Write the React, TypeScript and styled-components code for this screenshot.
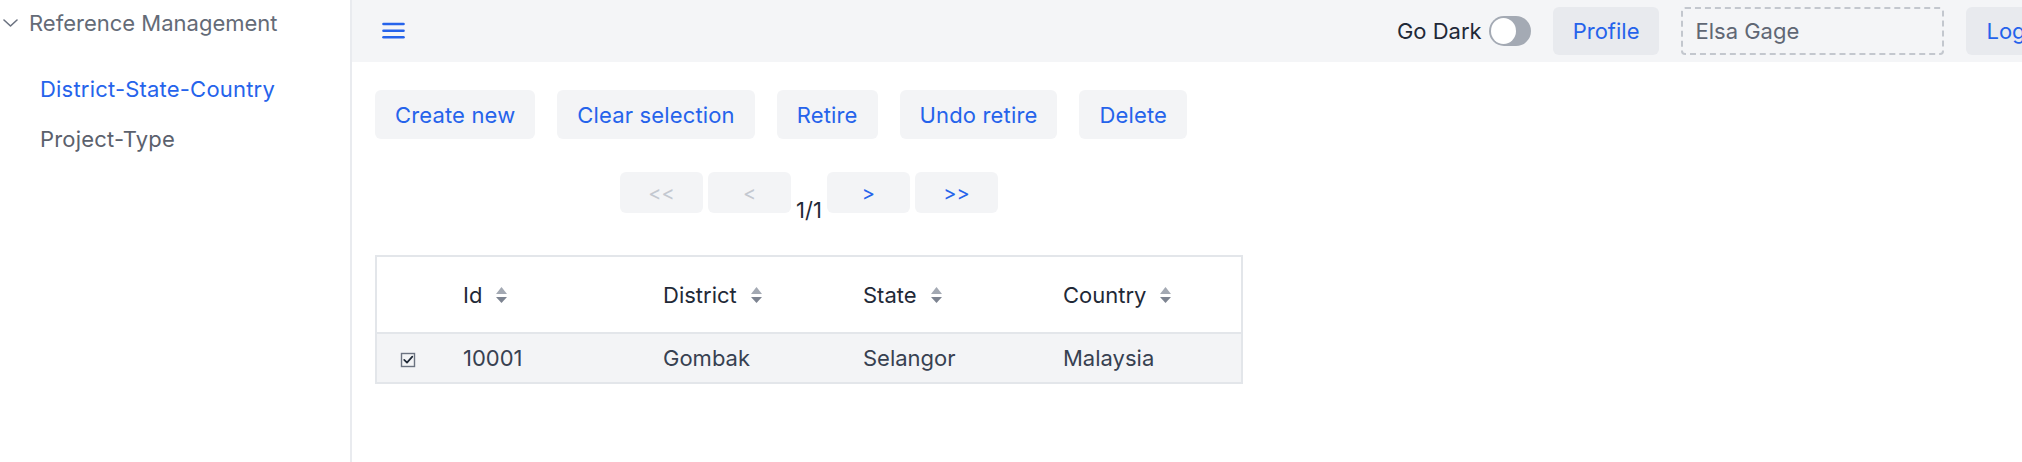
import styled, { createGlobalStyle } from 'styled-components'

const GlobalStyle = createGlobalStyle`
    html, body {
        margin: 0;
        padding: 0;
        background: #ffffff;
        overflow: hidden;
    }
    body {
        font-family: Inter, "Noto Sans", "Liberation Sans", sans-serif;
        color: #1f2937;
    }
    * {
        box-sizing: border-box;
    }
`

const rows = [
    { id: '10001', district: 'Gombak', state: 'Selangor', country: 'Malaysia' },
]

const columns = ['Id', 'District', 'State', 'Country']

export default function App() {
    return (
        <>
            <GlobalStyle />
            <Root>
                <Sidebar>
                    <GroupTitle>
                        <svg width="15" height="8" viewBox="0 0 15 8" aria-hidden="true">
                            <polyline points="1,1 7.5,7 14,1" fill="none" stroke="#6b7280" strokeWidth="1.6" strokeLinecap="round" strokeLinejoin="round" />
                        </svg>
                        Reference Management
                    </GroupTitle>
                    <NavList>
                        <NavItem $active>District-State-Country</NavItem>
                        <NavItem>Project-Type</NavItem>
                    </NavList>
                </Sidebar>

                <Main>
                    <TopBar>
                        <MenuButton aria-label="menu">
                            <svg width="23" height="18" viewBox="0 0 23 18" aria-hidden="true">
                                <g stroke="#2563eb" strokeWidth="2.6" strokeLinecap="round">
                                    <line x1="1.5" y1="2" x2="21.5" y2="2" />
                                    <line x1="1.5" y1="8.7" x2="21.5" y2="8.7" />
                                    <line x1="1.5" y1="15.3" x2="21.5" y2="15.3" />
                                </g>
                            </svg>
                        </MenuButton>
                        <TopRight>
                            <ThemeLabel>
                                Go Dark
                                <Toggle />
                            </ThemeLabel>
                            <BarButton>Profile</BarButton>
                            <UserBox>Elsa Gage</UserBox>
                            <BarButton>Logout</BarButton>
                        </TopRight>
                    </TopBar>

                    <Content>
                        <Actions>
                            <ActionButton>Create new</ActionButton>
                            <ActionButton>Clear selection</ActionButton>
                            <ActionButton>Retire</ActionButton>
                            <ActionButton>Undo retire</ActionButton>
                            <ActionButton>Delete</ActionButton>
                        </Actions>

                        <TableArea>
                            <Pager>
                                <PageButton disabled>&lt;&lt;</PageButton>
                                <PageButton disabled>&lt;</PageButton>
                                <PageCount>1/1</PageCount>
                                <PageButton>&gt;</PageButton>
                                <PageButton>&gt;&gt;</PageButton>
                            </Pager>

                            <Table>
                                <colgroup>
                                    <col style={{ width: 67 }} />
                                    <col style={{ width: 200 }} />
                                    <col style={{ width: 200 }} />
                                    <col style={{ width: 200 }} />
                                    <col />
                                </colgroup>
                                <thead>
                                    <tr>
                                        <HeadCell />
                                        {columns.map(c => (
                                            <HeadCell key={c}>
                                                <HeadInner>
                                                    {c}
                                                    <SortIcon />
                                                </HeadInner>
                                            </HeadCell>
                                        ))}
                                    </tr>
                                </thead>
                                <tbody>
                                    {rows.map(r => (
                                        <BodyRow key={r.id}>
                                            <CheckCell>
                                                <svg width="16" height="16" viewBox="0 0 16 16" aria-hidden="true">
                                                    <rect x="1.5" y="1.5" width="13" height="13" fill="none" stroke="#6b7280" strokeWidth="1.4" />
                                                    <polyline points="4.2,7.8 7,10.6 12.3,4.6" fill="none" stroke="#1f2937" strokeWidth="1.7" strokeLinecap="round" strokeLinejoin="round" />
                                                </svg>
                                            </CheckCell>
                                            <Cell>{r.id}</Cell>
                                            <Cell>{r.district}</Cell>
                                            <Cell>{r.state}</Cell>
                                            <Cell>{r.country}</Cell>
                                        </BodyRow>
                                    ))}
                                </tbody>
                            </Table>
                        </TableArea>
                    </Content>
                </Main>
            </Root>
        </>
    )
}

function SortIcon() {
    return (
        <svg width="11" height="18" viewBox="0 0 11 18" aria-hidden="true">
            <polygon points="0,8 5.5,1 11,8" fill="#a3a9b3" />
            <polygon points="0,11 5.5,17 11,11" fill="#7d8491" />
        </svg>
    )
}


/*___Styling___*/

const Root = styled.div`
    display: flex;
    width: 2103px;
    min-height: 462px;
`

const Sidebar = styled.aside`
    width: 352px;
    flex-shrink: 0;
    border-right: 2px solid #e9ebef;
    background: #ffffff;
`

const GroupTitle = styled.div`
    display: flex;
    align-items: center;
    gap: 11px;
    padding: 8px 0 8px 3px;
    line-height: 30px;
    font-size: 22px;
    color: #646b77;
`

const NavList = styled.ul`
    list-style: none;
    margin: 18px 0 0;
    padding: 0 0 0 40px;
`

const NavItem = styled.li<{ $active?: boolean }>`
    font-size: 22px;
    line-height: 30px;
    padding: 10px 0;
    letter-spacing: 0.2px;
    color: ${p => (p.$active ? '#2563eb' : '#5b616d')};
`

const Main = styled.main`
    flex: 1;
    display: flex;
    flex-direction: column;
`

const TopBar = styled.header`
    height: 62px;
    background: #f4f5f7;
    display: flex;
    align-items: center;
    padding: 0 24px 0 30px;
`

const MenuButton = styled.button`
    border: none;
    background: none;
    padding: 0;
    display: flex;
    cursor: pointer;
`

const TopRight = styled.div`
    margin-left: auto;
    display: flex;
    align-items: center;
    gap: 22px;
`

const ThemeLabel = styled.label`
    display: flex;
    align-items: center;
    gap: 7px;
    font-size: 22px;
    color: #1f2937;
`

const Toggle = styled.span`
    position: relative;
    display: inline-block;
    width: 42px;
    height: 30px;
    border-radius: 15px;
    background: #a4aab4;

    &::before {
        content: '';
        position: absolute;
        left: 2px;
        top: 2px;
        width: 25px;
        height: 26px;
        border-radius: 50%;
        background: #ffffff;
    }
`

const BarButton = styled.button`
    height: 48px;
    padding: 0 20px;
    border: none;
    border-radius: 6px;
    background: #e8eaee;
    color: #2563eb;
    font-family: inherit;
    font-size: 22px;
    cursor: pointer;
`

const UserBox = styled.div`
    width: 263px;
    height: 48px;
    display: flex;
    align-items: center;
    padding: 0 12px;
    border: 2px dashed #c3c7ce;
    border-radius: 4px;
    font-size: 22px;
    color: #606774;
`

const Content = styled.div`
    padding: 28px 23px;
`

const Actions = styled.div`
    display: flex;
    gap: 22px;
`

const ActionButton = styled.button`
    height: 49px;
    padding: 0 20px;
    border: none;
    border-radius: 6px;
    background: #f3f4f6;
    color: #2563eb;
    font-family: inherit;
    font-size: 22px;
    letter-spacing: 0.15px;
    cursor: pointer;
`

const TableArea = styled.div`
    width: 868px;
`

const Pager = styled.div`
    display: flex;
    justify-content: center;
    gap: 5px;
    margin: 33px 0 42px;
`

const PageButton = styled.button`
    width: 83px;
    height: 41px;
    border: none;
    border-radius: 6px;
    background: #f3f4f6;
    color: #2563eb;
    font-family: inherit;
    font-size: 20px;
    cursor: pointer;

    &:disabled {
        color: #c3c8d0;
        cursor: default;
    }
`

const PageCount = styled.span`
    align-self: flex-end;
    margin-bottom: -10px;
    font-size: 22px;
    line-height: 26px;
    color: #1f2937;
`

const Table = styled.table`
    width: 868px;
    table-layout: fixed;
    border-collapse: collapse;
    border: 2px solid #e3e6ea;
    font-size: 22px;
`

const HeadCell = styled.th`
    height: 77px;
    padding: 0 0 0 20px;
    text-align: left;
    font-weight: 400;
    color: #1f2937;
    border-bottom: 2px solid #e3e6ea;
`

const HeadInner = styled.span`
    display: inline-flex;
    align-items: center;
    gap: 14px;
`

const BodyRow = styled.tr`
    background: #f3f4f6;
`

const CheckCell = styled.td`
    height: 50px;
    padding: 4px 0 0 23px;
    vertical-align: middle;
`

const Cell = styled.td`
    padding: 0 0 0 20px;
    color: #374151;
`
